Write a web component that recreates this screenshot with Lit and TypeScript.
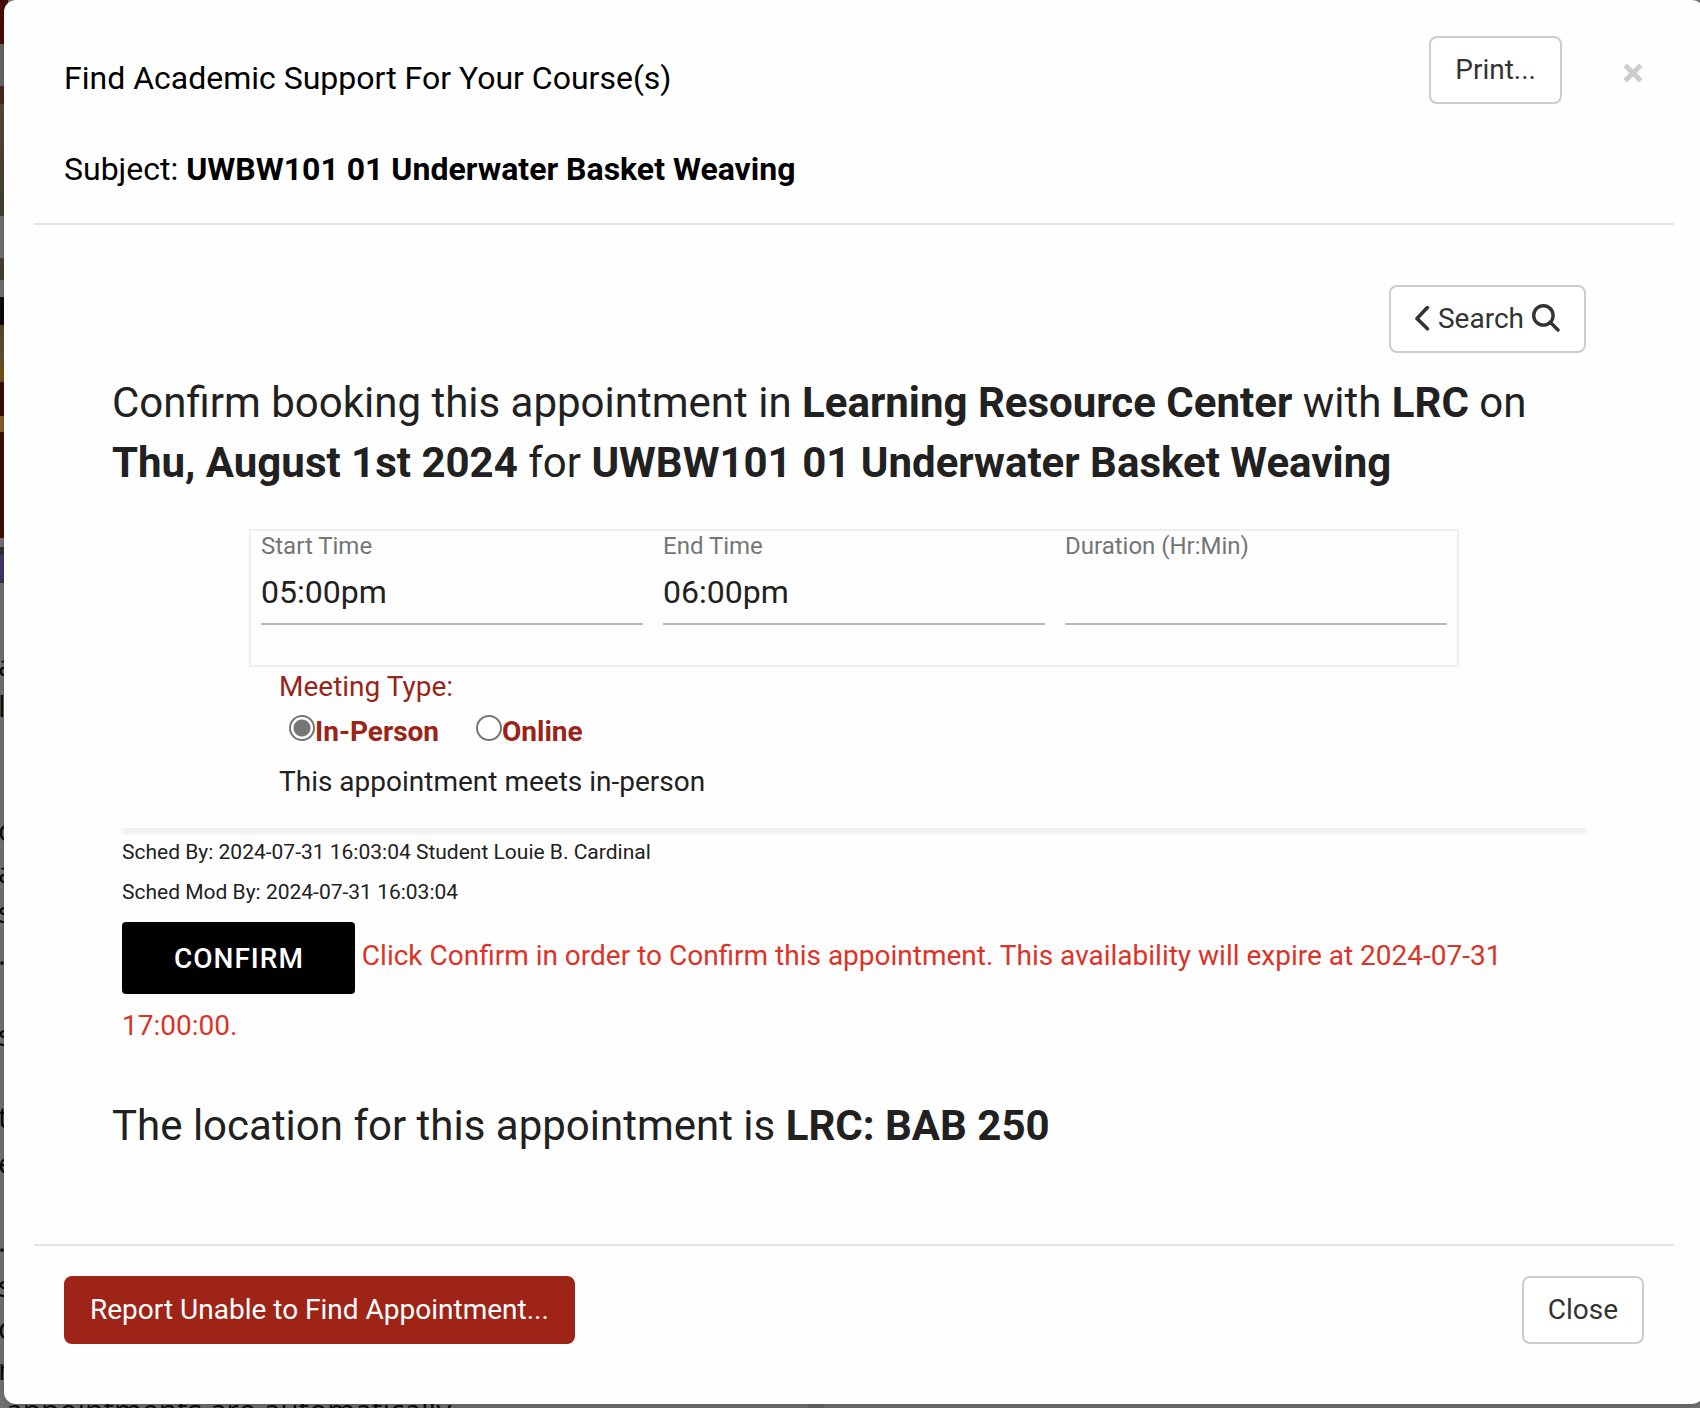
import { LitElement, html, css } from "lit";
import { customElement, state } from "lit/decorators.js";

const EDGE_GLYPHS = [
  { y: 647, c: "a" },
  { y: 688, c: "l" },
  { y: 812, c: "c" },
  { y: 854, c: "a" },
  { y: 894, c: "s" },
  { y: 936, c: "." },
  { y: 1017, c: "s" },
  { y: 1099, c: "t" },
  { y: 1145, c: "e" },
  { y: 1223, c: "." },
  { y: 1268, c: "s" },
  { y: 1310, c: "d" },
  { y: 1351, c: "m" },
];

/** The dimmed page that shows around the dialog. */
@customElement("dimmed-page")
export class DimmedPage extends LitElement {
  static styles = css`
    :host {
      position: absolute;
      inset: 0;
      overflow: hidden;
      color: #0c0c0c;
      font: 30px/36px "Open Sans", "Noto Sans", sans-serif;
      background:
        linear-gradient(#4a0d04 0 44px, #6d6b69 44px 86px, #4a2820 86px 104px, #5a4c3a 104px, #484236 216px,
          #777 216px 258px, #4a4436 258px 280px, #777 280px 297px, #0d0906 297px 325px, #5c4a2c 325px,
          #6b5632 366px, #7a5518 366px 382px, #3d0e06 382px 416px, #8a6428 416px 432px, #400f06 432px 538px,
          #777 538px 547px, #333 547px 555px, #4a3a70 555px 575px, #3c3450 583px, transparent 583px)
          0 0 / 8px 100% no-repeat,
        linear-gradient(#6c6a6a, #6c6a6a) 808px 100% / 16px 8px no-repeat,
        #7a7876;
    }
    .glyph {
      position: absolute;
      left: -2px;
    }
    .line {
      position: absolute;
      left: 6px;
      top: 1392px;
      white-space: nowrap;
    }
  `;

  render() {
    return html`
      ${EDGE_GLYPHS.map((g) => html`<span class="glyph" style="top:${g.y}px">${g.c}</span>`)}
      <span class="line">appointments are automatically</span>
    `;
  }
}

@customElement("app-root")
export class AppRoot extends LitElement {
  @state() private meeting = "in-person";

  static styles = css`
    :host {
      display: block;
      position: relative;
      overflow: hidden;
      font-family: Roboto, "Liberation Sans", sans-serif;
      font-size: 28px;
      line-height: 40px;
      color: #212121;
    }
    * {
      box-sizing: border-box;
    }
    h1, h2, p {
      margin: 0;
      padding: 0;
      font-weight: 400;
    }
    button {
      font: inherit;
      cursor: pointer;
    }
    .dialog {
      position: relative;
      margin: 0 -4px 4px 4px;
      padding: 0 30px;
      background: #fefefe;
      border-radius: 12px;
      box-shadow: 0 4px 16px rgba(0, 0, 0, 0.25);
    }
    .header {
      display: flex;
      align-items: flex-start;
      padding: 36px 30px 16px;
      border-bottom: 2px solid #e3e3e3;
      color: #000;
    }
    .titles {
      flex: 1;
      padding-top: 20px;
      font-size: 32px;
      line-height: 44px;
    }
    .titles h1 {
      font-size: 32px;
      line-height: 44px;
    }
    .titles p {
      margin: 47px 0 16px;
    }
    .btn {
      display: inline-flex;
      align-items: center;
      gap: 8px;
      height: 68px;
      padding: 0 24px;
      border: 2px solid #ccc;
      border-radius: 8px;
      background: #fff;
      color: #333;
    }
    .btn.primary {
      border-color: #9e2417;
      background: #9e2417;
      color: #fff;
    }
    .dismiss {
      display: flex;
      margin: 27px 1px 0 61px;
      padding: 0;
      border: 0;
      background: none;
    }
    svg {
      display: block;
    }
    .body {
      padding: 60px 88px 88px;
    }
    .toolbar {
      display: flex;
      justify-content: flex-end;
    }
    .lead {
      margin: 20px -10px 0;
      font-size: 42px;
      line-height: 60px;
    }
    .times {
      display: grid;
      grid-template-columns: repeat(3, 1fr);
      gap: 20px;
      margin: 36px 127px 0;
      padding: 0 10px 40px;
      border: 2px solid #eee;
    }
    .field {
      display: flex;
      flex-direction: column;
      color: #757575;
      font-size: 24px;
      line-height: 30px;
    }
    .field input {
      width: 100%;
      height: 64px;
      padding: 0;
      border: 0;
      border-bottom: 2px solid #b9b9b9;
      outline: 0;
      background: none;
      color: #212121;
      font: 32px/40px Roboto, "Liberation Sans", sans-serif;
    }
    .meeting {
      margin: 0 157px;
    }
    .caption {
      color: #9a2418;
    }
    .options {
      display: flex;
      gap: 37px;
      padding: 5px 10px 10px;
      color: #9a2418;
      font-weight: 700;
    }
    .options label {
      display: flex;
      align-items: center;
    }
    .options input {
      appearance: none;
      width: 26px;
      height: 26px;
      margin: 0 0 8px;
      border: 2px solid #767676;
      border-radius: 50%;
      background: #fff;
    }
    .options input:checked {
      background: radial-gradient(circle, #767676 0 8px, #fff 9px);
    }
    .rule {
      height: 2px;
      margin: 24px 0 4px;
      border: 0;
      background: #fff;
      box-shadow: 0 4px 4px rgba(0, 0, 0, 0.18), 0 0 2px rgba(0, 0, 0, 0.08);
    }
    .log {
      font-size: 21px;
    }
    .notice {
      line-height: 43px;
      color: #dc3328;
    }
    .confirm {
      height: 72px;
      margin: 10px 0;
      padding: 0 51px 0 52px;
      border: 0;
      border-radius: 4px;
      background: #000;
      color: #fff;
      font-weight: 500;
      letter-spacing: 1px;
      vertical-align: middle;
    }
    .place {
      margin-top: 49px;
    }
    .footer {
      display: flex;
      justify-content: space-between;
      padding: 30px 30px 60px;
      border-top: 2px solid #e3e3e3;
    }
  `;

  private option(value: string, label: string) {
    return html`<label>
      <input
        type="radio"
        name="meeting"
        .value=${value}
        .checked=${this.meeting === value}
        @change=${() => (this.meeting = value)}
      />${label}</label
    >`;
  }

  private field(label: string, value: string) {
    return html`<label class="field">${label}<input type="text" .value=${value} /></label>`;
  }

  render() {
    return html`
      <dimmed-page aria-hidden="true"></dimmed-page>
      <div class="dialog" role="dialog" aria-labelledby="title">
        <header class="header">
          <div class="titles">
            <h1 id="title">Find Academic Support For Your Course(s)</h1>
            <p>Subject: <b>UWBW101 01 Underwater Basket Weaving</b></p>
          </div>
          <button class="btn">Print...</button>
          <button class="dismiss" aria-label="Dismiss">
            <svg width="20" height="20" viewBox="0 0 20 20" fill="none" stroke="#ccc" stroke-width="5">
              <path d="M2.2 2.2 17.8 17.8M17.8 2.2 2.2 17.8" />
            </svg>
          </button>
        </header>

        <main class="body">
          <div class="toolbar">
            <button class="btn">
              <svg width="15" height="26" viewBox="0 0 15 26" fill="none" stroke="#333" stroke-width="3.6" stroke-linecap="round" stroke-linejoin="round">
                <path d="M12.4 1.6 2 12.4 12.4 22.8" />
              </svg>
              Search
              <svg width="28" height="30" viewBox="0 0 28 30" fill="none" stroke="#333" stroke-width="3.4" stroke-linecap="round">
                <circle cx="11.4" cy="11.4" r="9.7" />
                <path d="M18.5 18.5 26 26" />
              </svg>
            </button>
          </div>

          <h2 class="lead">
            Confirm booking this appointment in <b>Learning Resource Center</b> with <b>LRC</b> on
            <b>Thu, August 1st 2024</b> for <b>UWBW101 01 Underwater Basket Weaving</b>
          </h2>

          <div class="times">
            ${this.field("Start Time", "05:00pm")} ${this.field("End Time", "06:00pm")}
            ${this.field("Duration (Hr:Min)", "")}
          </div>

          <div class="meeting" role="radiogroup" aria-labelledby="type">
            <div class="caption" id="type">Meeting Type:</div>
            <div class="options">${this.option("in-person", "In-Person")}${this.option("online", "Online")}</div>
            <p>This appointment meets in-person</p>
          </div>

          <hr class="rule" />

          <p class="log">Sched By: 2024-07-31 16:03:04 Student Louie B. Cardinal</p>
          <p class="log">Sched Mod By: 2024-07-31 16:03:04</p>
          <p class="notice">
            <button class="confirm">CONFIRM</button>
            Click Confirm in order to Confirm this appointment. This availability will expire at 2024-07-31 17:00:00.
          </p>
          <h2 class="lead place">The location for this appointment is <b>LRC: BAB 250</b></h2>
        </main>

        <footer class="footer">
          <button class="btn primary">Report Unable to Find Appointment...</button>
          <button class="btn">Close</button>
        </footer>
      </div>
    `;
  }
}
